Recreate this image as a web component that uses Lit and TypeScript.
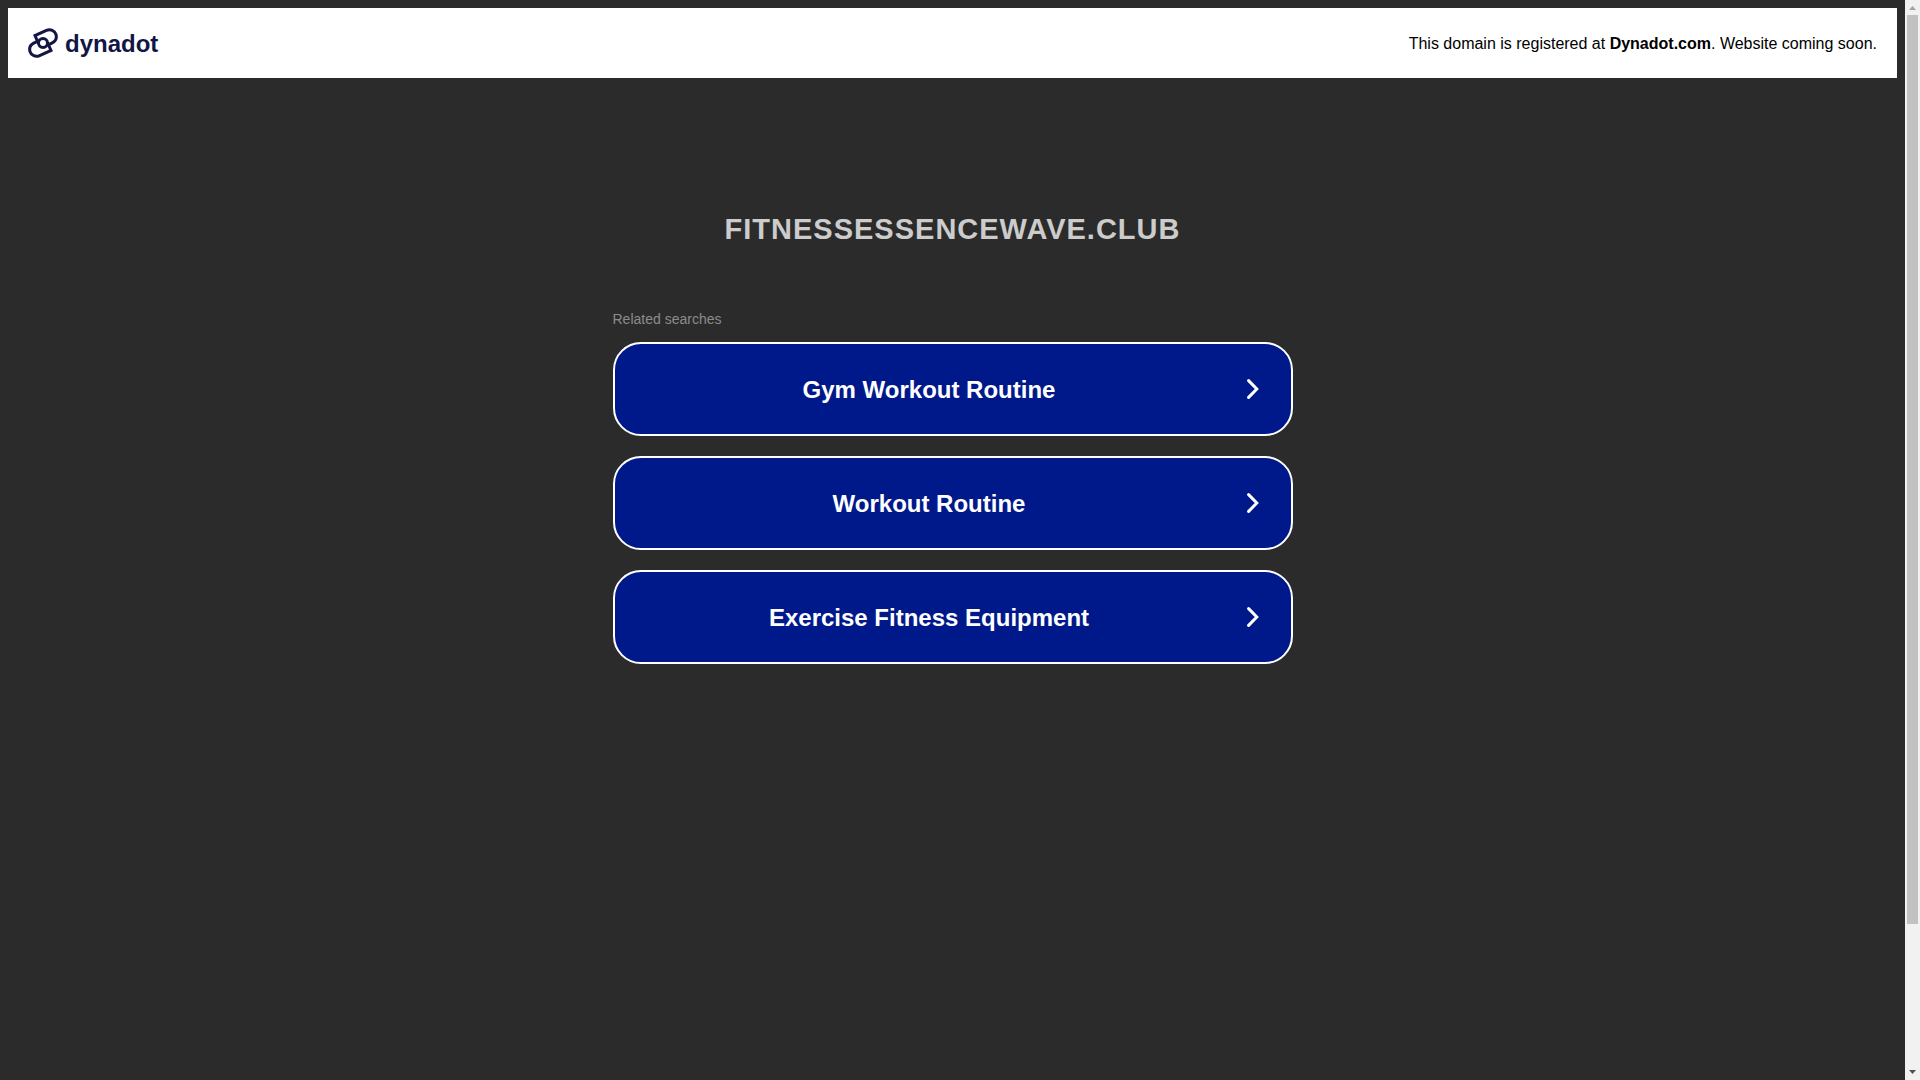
import { LitElement, html, css, svg } from "lit";
import { customElement } from "lit/decorators.js";

const searches = ["Gym Workout Routine", "Workout Routine", "Exercise Fitness Equipment"];

const chevron = svg`<svg class="chevron" viewBox="0 0 12 20" aria-hidden="true">
  <path d="M1.6 1.6L9.8 10L1.6 18.4" fill="none" stroke="#fff" stroke-width="3" stroke-linecap="round"></path>
</svg>`;

@customElement("app-root")
export class AppRoot extends LitElement {
  static styles = css`
    :host {
      display: grid;
      grid-template-columns: minmax(0, 1fr) 15px;
      min-height: 100vh;
      background: #2b2b2b;
      font-family: "Liberation Sans", Arial, sans-serif;
    }
    .page {
      padding: 8px;
    }
    .banner {
      display: flex;
      align-items: center;
      justify-content: space-between;
      padding: 20px;
      background: #fff;
    }
    .brand {
      display: flex;
      align-items: center;
      gap: 7px;
      color: #131545;
      font-size: 24px;
      line-height: 28px;
      font-weight: 700;
      text-decoration: none;
    }
    .brand span {
      padding-top: 2px;
    }
    .mark {
      width: 30px;
      height: 30px;
    }
    .notice {
      margin: 0;
      padding-top: 2px;
      font-size: 16px;
      line-height: 24px;
      color: #000;
    }
    .notice a {
      color: inherit;
      font-weight: 700;
      text-decoration: none;
    }
    .content {
      max-width: 680px;
      margin: 0 auto;
      padding-top: 133px;
    }
    h1 {
      margin: 0;
      text-align: center;
      text-transform: uppercase;
      font-size: 29px;
      line-height: 36px;
      letter-spacing: 1px;
      color: #ccc;
    }
    h2 {
      margin: 63px 0 14px;
      font-size: 14px;
      line-height: 18px;
      font-weight: 400;
      color: #8c8c8c;
    }
    .list {
      display: flex;
      flex-direction: column;
      gap: 20px;
      margin: 0;
      padding: 0;
      list-style: none;
    }
    .card {
      display: flex;
      align-items: center;
      padding: 30px 32px;
      border: 2px solid #fff;
      border-radius: 28px;
      background: #00198a;
      color: #fff;
      font-size: 24px;
      line-height: 28px;
      font-weight: 700;
      text-decoration: none;
    }
    .label {
      flex: 1;
      text-align: center;
      padding: 2px 35px 0 0;
    }
    .chevron {
      width: 12px;
      height: 20px;
    }
    .scrollbar {
      display: flex;
      flex-direction: column;
      align-items: center;
      background: #f1f1f1;
    }
    .arrow {
      width: 15px;
      height: 15px;
    }
    .track {
      flex: 1;
      width: 11px;
    }
    .thumb {
      height: 86.6%;
      background: #c1c1c1;
    }
  `;

  render() {
    return html`
      <div class="page">
        <header class="banner">
          <a class="brand" href="#">
            <svg class="mark" viewBox="0 0 30 30" aria-hidden="true">
              <g fill="none" stroke="#131545" stroke-width="3">
                <path d="M10.6 15.6L7 7.6L18.4 2.4C22.4 0.6 26.8 2.5 28 6.5C29 10.2 27.4 13.2 24.3 14.8L19 17.4"></path>
                <path d="M19.4 14.4L23 22.4L11.6 27.6C7.6 29.4 3.2 27.5 2 23.5C1 19.8 2.6 16.8 5.7 15.2L11 12.6"></path>
                <circle cx="15" cy="15" r="4.5"></circle>
              </g>
            </svg>
            <span>dynadot</span>
          </a>
          <p class="notice">This domain is registered at <a href="#">Dynadot.com</a>. Website coming soon.</p>
        </header>
        <main class="content">
          <h1>fitnessessencewave.club</h1>
          <h2>Related searches</h2>
          <ul class="list">
            ${searches.map(
              (s) => html`<li><a class="card" href="#"><span class="label">${s}</span>${chevron}</a></li>`
            )}
          </ul>
        </main>
      </div>
      <div class="scrollbar" aria-hidden="true">
        <svg class="arrow" viewBox="0 0 15 15"><path d="M4 10L7.5 6L11 10Z" fill="#a3a3a3"></path></svg>
        <div class="track"><div class="thumb"></div></div>
        <svg class="arrow" viewBox="0 0 15 15"><path d="M4 5L7.5 9L11 5Z" fill="#505050"></path></svg>
      </div>
    `;
  }
}
